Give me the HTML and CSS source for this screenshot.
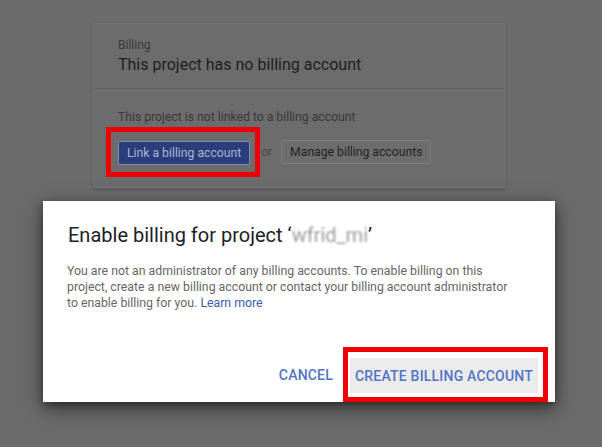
FILE: index.html
```html
<!DOCTYPE html>
<html lang="en">
<head>
<meta charset="utf-8">
<title>Enable billing</title>
<link rel="stylesheet" href="styles.css">
</head>
<body>
<div class="page">
  <section class="card">
    <header class="card-head">
      <div class="eyebrow">Billing</div>
      <h1 class="card-title">This project has no billing account</h1>
    </header>
    <div class="card-body">
      <p class="card-text">This project is not linked to a billing account</p>
      <div class="card-actions">
        <div class="mark mark-link">
          <button class="btn-primary">Link a billing account</button>
        </div>
        <span class="or">or</span>
        <button class="btn-outline">Manage billing accounts</button>
      </div>
    </div>
  </section>

  <section class="dialog">
    <h2 class="dialog-title">Enable billing for project ‘<span class="redacted">wfrid_mi</span>’</h2>
    <p class="dialog-text">You are not an administrator of any billing accounts. To enable billing on this project, create a new billing account or contact your billing account administrator to enable billing for you. <a class="link" href="#">Learn more</a></p>
    <div class="dialog-actions">
      <button class="btn-text">CANCEL</button>
      <div class="mark mark-create">
        <button class="btn-text btn-filled">CREATE BILLING ACCOUNT</button>
      </div>
    </div>
  </section>
</div>
</body>
</html>
```

FILE: styles.css
```css
* { box-sizing: border-box; }
html, body { margin: 0; padding: 0; }
body {
  background: #6b6b6b;
  font-family: Roboto, "Liberation Sans", Arial, sans-serif;
  width: 602px;
  height: 447px;
  overflow: hidden;
}
.page {
  display: flex;
  flex-direction: column;
  align-items: flex-start;
}

/* underlying (dimmed) card */
.card {
  margin: 23px 0 0 93px;
  width: 412px;
  height: 165px;
  background: #6c6c6c;
  border: 1px solid #737373;
  box-shadow: 0 2px 3px rgba(0,0,0,0.18);
}
.card-head {
  padding: 13px 24px 0 24px;
  height: 65px;
  border-bottom: 1px solid #616161;
}
.eyebrow {
  font-size: 12px;
  line-height: 16px;
  color: #3a3a3a;
}
.card-title {
  margin: 2px 0 0 0;
  font-size: 16px;
  font-weight: 400;
  line-height: 20px;
  color: #1f1f1f;
}
.card-body {
  padding: 20px 12px 0 12px;
}
.card-text {
  margin: 0 0 0 12px;
  font-size: 12.2px;
  line-height: 16px;
  color: #393939;
}
.card-actions {
  display: flex;
  align-items: center;
  margin-top: 2px;
}
.mark {
  border: 5px solid #ee0000;
}
.mark-link {
  padding: 9px 5px 7px 7px;
}
.btn-primary {
  display: block;
  height: 24px;
  padding: 0 8px;
  font-family: inherit;
  font-size: 12.2px;
  color: #aab4d4;
  background: #2b3d7a;
  border: 1px solid #7d8cb8;
  border-radius: 1px;
}
.or {
  margin-left: 1px;
  font-size: 12px;
  color: #474747;
}
.btn-outline {
  margin-left: 9px;
  height: 24px;
  padding: 0 8px;
  font-family: inherit;
  font-size: 12.2px;
  color: #242424;
  background: #6d6d6d;
  border: 1px solid #7c7c7c;
  border-radius: 1px;
}

/* dialog */
.dialog {
  margin: 13px 0 0 43px;
  width: 512px;
  height: 201px;
  background: #ffffff;
  box-shadow: 0 6px 18px rgba(0,0,0,0.55), 0 2px 6px rgba(0,0,0,0.3);
  display: flex;
  flex-direction: column;
}
.dialog-title {
  margin: 0;
  padding: 20px 24px 0 25px;
  font-size: 20px;
  font-weight: 400;
  line-height: 28px;
  color: #202124;
}
.redacted {
  color: #9a9a9a;
  filter: blur(1.3px);
}
.dialog-text {
  margin: 14px 0 0 0;
  padding: 0 38px 0 24px;
  font-size: 12.3px;
  line-height: 16px;
  color: #666666;
}
.link {
  color: #3b5cae;
  text-decoration: none;
}
.dialog-actions {
  margin-top: auto;
  display: flex;
  justify-content: flex-end;
  align-items: center;
  padding-right: 7px;
}
.btn-text {
  font-family: inherit;
  font-size: 14px;
  font-weight: 500;
  letter-spacing: 0.2px;
  color: #5174c6;
  background: transparent;
  border: 0;
  height: 35px;
  padding: 0 7px;
}
.mark-create {
  margin-left: 3px;
  padding: 6px 5px 4px 2px;
}
.btn-filled {
  display: block;
  background: #ebebeb;
  width: 188px;
  padding: 0;
}
```
